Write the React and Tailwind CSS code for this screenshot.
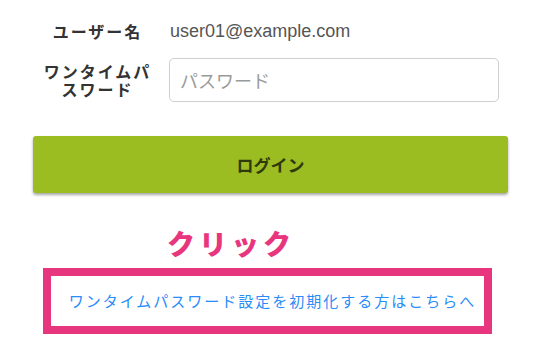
import React from 'react';

const cjk = { fontFamily: '"Noto Sans CJK JP", "Noto Sans", sans-serif' };

export default function App() {
  return (
    <div className="h-[351px] w-[556px] overflow-hidden bg-white text-[#333]" style={cjk}>
      <div className="px-[33px] pt-[14px]">
        <div className="flex h-[34px] items-center">
          <div className="w-[127px] pl-[2px] text-center text-[16px] font-bold leading-[18px] tracking-[2px]">
            ユーザー名
          </div>
          <div
            className="ml-[10px] text-[18px] text-[#555]"
            style={{ fontFamily: '"Liberation Sans", Arial, sans-serif' }}
          >
            user01@example.com
          </div>
        </div>

        <div className="mt-[10px] flex items-center">
          <div className="flex w-[127px] flex-col pl-[2px] text-center text-[16px] font-bold leading-[18px] tracking-[2px]">
            <span>ワンタイムパ</span>
            <span>スワード</span>
          </div>
          <input
            type="password"
            placeholder="パスワード"
            className="ml-[9px] h-[44px] w-[330px] rounded-[5px] border border-[#cfcfcf] px-[10px] text-[18px] text-[#333] outline-none placeholder:text-[#9a9a9a]"
          />
        </div>

        <button className="mt-[34px] h-[57px] w-[475px] rounded-[3px] bg-[#9bbd22] text-[17px] font-bold text-[#2e3a0c] shadow-[0_2px_3px_rgba(0,0,0,0.35)]">
          ログイン
        </button>
      </div>

      <div className="mt-[35px] pl-[167px] text-[28px] font-black leading-[30px] tracking-[4px] text-[#e8367e]">
        クリック
      </div>

      <div className="ml-[43px] mt-[10px] flex h-[66px] w-[449px] items-center justify-center border-[8px] border-[#e8367e]">
        <a href="#" className="pl-[10px] text-[15px] tracking-[2px] text-[#2a8cf7]">
          ワンタイムパスワード設定を初期化する方はこちらへ
        </a>
      </div>
    </div>
  );
}
